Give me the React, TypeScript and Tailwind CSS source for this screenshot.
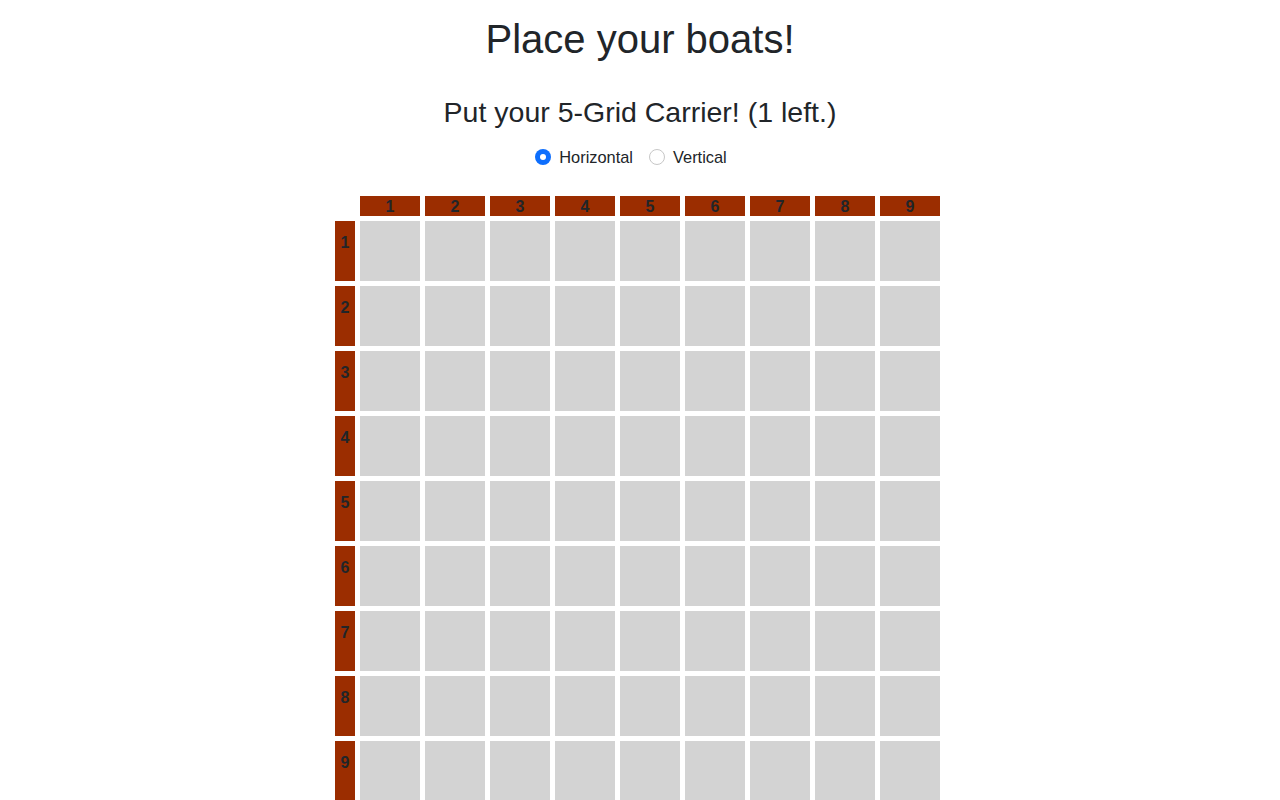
import React from 'react';

const nums = [1, 2, 3, 4, 5, 6, 7, 8, 9];

export default function App() {
    return (
        <div className="min-h-screen bg-white text-[#212529] font-['Liberation_Sans',Arial,sans-serif] flex flex-col items-center">
            <h1 className="mt-[15px] text-[40px] leading-[48px] font-normal">Place your boats!</h1>
            <h3 className="mt-[32px] text-[28.5px] leading-[34px] font-normal">Put your 5-Grid Carrier! (1 left.)</h3>

            <div className="mt-[16px] mr-[18px] flex items-center gap-4 text-[16.4px] leading-6">
                <label className="flex items-center gap-2">
                    <span className="w-4 h-4 rounded-full bg-[#0d6efd] flex items-center justify-center">
                        <span className="w-[6px] h-[6px] rounded-full bg-white" />
                    </span>
                    Horizontal
                </label>
                <label className="flex items-center gap-2">
                    <span className="w-4 h-4 rounded-full border border-[#c7c7c7] bg-white" />
                    Vertical
                </label>
            </div>

            <div className="mt-[27px] ml-[-5px] flex flex-col gap-[5px] font-bold text-[16px]">
                <div className="flex gap-[5px]">
                    <div className="w-5 h-5" />
                    {nums.map((n) => (
                        <div key={n} className="w-[60px] h-5 bg-[#9b2d00] flex items-center justify-center leading-5 pt-[1px]">
                            {n}
                        </div>
                    ))}
                </div>
                {nums.map((r) => (
                    <div key={r} className="flex gap-[5px]">
                        <div className="w-5 h-[60px] bg-[#9b2d00] text-center pt-[12px] leading-5">{r}</div>
                        {nums.map((c) => (
                            <div key={c} className="w-[60px] h-[60px] bg-[#d3d3d3]" />
                        ))}
                    </div>
                ))}
            </div>
        </div>
    );
}
